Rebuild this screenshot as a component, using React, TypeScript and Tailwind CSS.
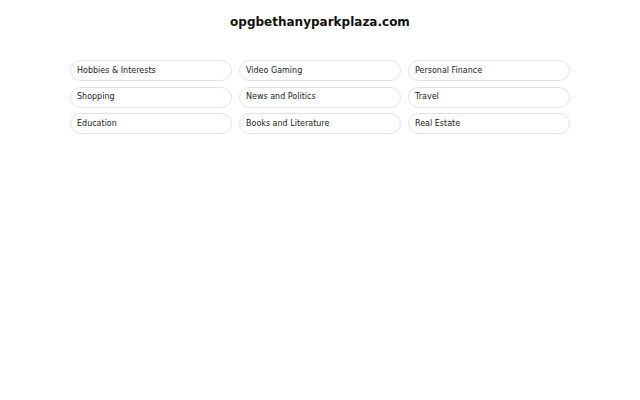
const categories = [
  'Hobbies & Interests',
  'Video Gaming',
  'Personal Finance',
  'Shopping',
  'News and Politics',
  'Travel',
  'Education',
  'Books and Literature',
  'Real Estate',
];

export default function App() {
  return (
    <div className="min-h-screen bg-white text-gray-900" style={{ fontFamily: '"DejaVu Sans", sans-serif' }}>
      <div className="pt-[13px] flex justify-center">
        <h1 className="text-[12px] font-bold leading-[18px] text-[#111]">opgbethanyparkplaza.com</h1>
      </div>
      <div className="mx-auto mt-[29px] w-[500px] grid grid-cols-3 gap-x-[7px] gap-y-[5.5px]">
        {categories.map((c) => (
          <div
            key={c}
            className="h-[21px] rounded-full border border-[#e2e2e2] px-[6px] flex items-center text-[8px] text-[#222]"
          >
            {c}
          </div>
        ))}
      </div>
    </div>
  );
}
